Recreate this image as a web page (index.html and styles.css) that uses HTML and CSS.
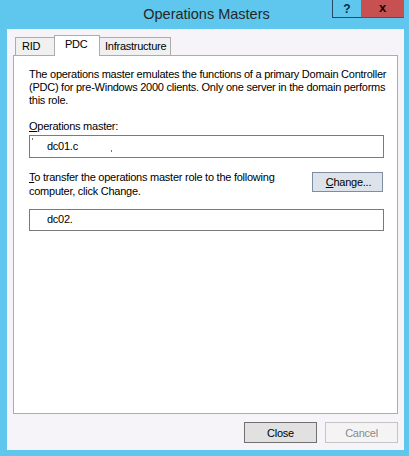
FILE: index.html
```html
<!DOCTYPE html>
<html>
<head>
<meta charset="utf-8">
<link rel="stylesheet" href="styles.css">
</head>
<body>
<div class="window">
  <div class="titlebar">
    <div class="title">Operations Masters</div>
    <div class="caption-buttons">
      <div class="cap-btn help">?</div>
      <div class="cap-btn close">x</div>
    </div>
  </div>
  <div class="client">
    <div class="tabs">
      <div class="tab">RID</div>
      <div class="tab active">PDC</div>
      <div class="tab">Infrastructure</div>
    </div>
    <div class="panel">
      <p class="desc">The operations master emulates the functions of a primary Domain Controller (PDC) for pre-Windows 2000 clients. Only one server in the domain performs this role.</p>
      <div class="label acc">Operations master:</div>
      <div class="field first"><span class="speck s1"></span>dc01.c<span class="speck s2"></span></div>
      <div class="transfer">
        <div class="transfer-text acc">To transfer the operations master role to the following computer, click Change.</div>
        <div class="btn change acc">Change...</div>
      </div>
      <div class="field second">dc02.</div>
    </div>
    <div class="footer">
      <div class="btn close-btn">Close</div>
      <div class="btn cancel">Cancel</div>
    </div>
  </div>
</div>
</body>
</html>
```

FILE: styles.css
```css
html, body {
  margin: 0;
  padding: 0;
}
body {
  font-family: "Liberation Sans", Arial, sans-serif;
  font-size: 11px;
  letter-spacing: -0.25px;
  color: #000;
}
.window {
  position: relative;
  width: 409px;
  height: 456px;
  box-sizing: border-box;
  background: #5fc6ee;
  padding: 0 5px 6px 7px;
  display: flex;
  flex-direction: column;
}
.titlebar {
  height: 29px;
  flex: none;
  display: flex;
  justify-content: center;
}
.title {
  font-size: 14.5px;
  letter-spacing: 0;
  color: #262626;
  line-height: 28px;
  padding-left: 2px;
}
.caption-buttons {
  position: absolute;
  top: 0;
  left: 332px;
  display: flex;
}
.cap-btn {
  height: 18px;
  box-sizing: border-box;
  display: flex;
  align-items: center;
  justify-content: center;
  font-weight: bold;
  letter-spacing: 0;
}
.help {
  width: 29px;
  border: 1px solid #274766;
  border-top: none;
  border-right: none;
  color: #0c2a52;
  font-size: 12px;
}
.close {
  width: 43px;
  background: #c75050;
  border-bottom: 1px solid #8a3a3a;
  color: #1a0505;
  font-size: 13px;
  padding-bottom: 2px;
}
.client {
  flex: 1;
  background: #f6f4f8;
  padding: 6px 6px 0 6px;
  display: flex;
  flex-direction: column;
}
.tabs {
  display: flex;
  align-items: flex-end;
  height: 20px;
  padding-left: 2px;
  position: relative;
  z-index: 1;
}
.tab {
  height: 18px;
  box-sizing: border-box;
  border: 1px solid #acacac;
  border-bottom: none;
  background: #f0f0f0;
  padding: 0 5px;
  line-height: 17px;
}
.tab:first-child {
  width: 40px;
  padding-left: 6px;
}
.tab.active {
  height: 21px;
  width: 46px;
  margin-bottom: -1px;
  background: #fff;
  padding-left: 10px;
  line-height: 16px;
  margin-left: -1px;
  margin-right: -1px;
}
.tab:last-child {
  width: 72px;
}
.panel {
  height: 359px;
  box-sizing: border-box;
  background: #fff;
  border: 1px solid #acacac;
  padding: 12px 13px 0 15px;
}
.desc {
  margin: 0;
  line-height: 13px;
  width: 370px;
}
.acc::first-letter {
  text-decoration: underline;
}
.label {
  margin-top: 12px;
  line-height: 14px;
}
.field {
  position: relative;
  height: 23px;
  box-sizing: border-box;
  border: 1px solid #6f7d8c;
  padding-left: 17px;
  line-height: 20px;
  margin-top: 2px;
}
.speck {
  position: absolute;
  width: 1px;
  height: 2px;
  background: #777;
}
.s1 { left: 2px; top: 2px; }
.s2 { left: 81px; top: 14px; }
.transfer {
  display: flex;
  justify-content: space-between;
  margin-top: 12px;
  padding-right: 1px;
}
.transfer-text {
  width: 260px;
  line-height: 14px;
}
.btn {
  height: 21px;
  width: 73px;
  box-sizing: border-box;
  display: flex;
  align-items: center;
  justify-content: center;
}
.change {
  display: block;
  text-align: center;
  width: 71px;
  height: 20px;
  line-height: 18px;
  margin-top: 2px;
  background: #dde3ea;
  border: 1px solid #7e8ea0;
  padding-left: 2px;
}
.field.second {
  margin-top: 11px;
  height: 22px;
  border-color: #7a7a7a;
  line-height: 19px;
}
.footer {
  display: flex;
  justify-content: flex-end;
  gap: 8px;
  margin-top: 8px;
}
.close-btn {
  background: #e1e1e1;
  border: 1px solid #707070;
}
.cancel {
  background: #f4f4f4;
  border: 1px solid #c4c4c4;
  color: #8a8a8a;
}
```
